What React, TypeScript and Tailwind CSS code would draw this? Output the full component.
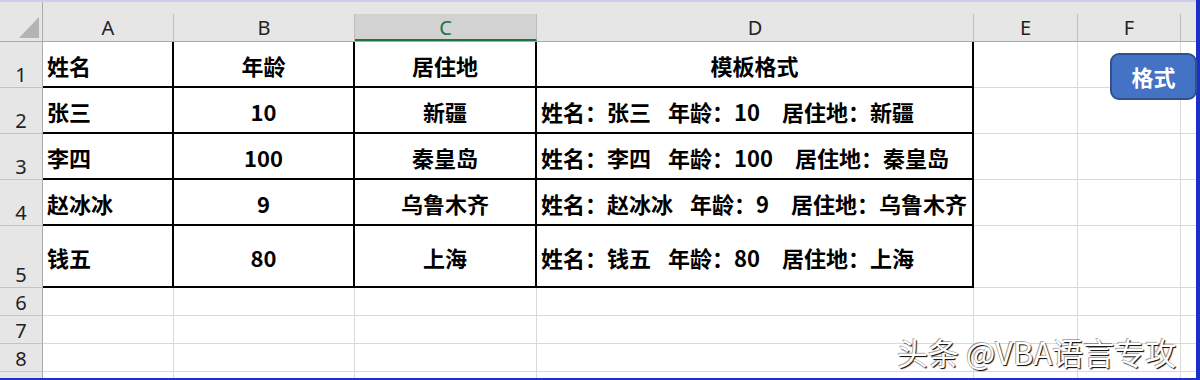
import React from "react";

const FONT = '"Noto Sans CJK SC", "Noto Sans", sans-serif';
const HFONT = '"Noto Sans", "Liberation Sans", sans-serif';

const cols = [
  { key: "A", w: "w-[131px]" },
  { key: "B", w: "w-[181px]" },
  { key: "C", w: "w-[182px]" },
  { key: "D", w: "w-[437px]" },
  { key: "E", w: "w-[104px]" },
  { key: "F", w: "w-[103px]" },
];

type Row = { n: number; h: string; data?: [string, string, string, string] };

const rows: Row[] = [
  { n: 1, h: "h-[46px]", data: ["姓名", "年龄", "居住地", "模板格式"] },
  { n: 2, h: "h-[46px]", data: ["张三", "10", "新疆", ""] },
  { n: 3, h: "h-[46px]", data: ["李四", "100", "秦皇岛", ""] },
  { n: 4, h: "h-[46px]", data: ["赵冰冰", "9", "乌鲁木齐", ""] },
  { n: 5, h: "h-[62px]", data: ["钱五", "80", "上海", ""] },
  { n: 6, h: "h-[28px]" },
  { n: 7, h: "h-[28px]" },
  { n: 8, h: "h-[28px]" },
];

function Template({ name, age, place }: { name: string; age: string; place: string }) {
  return (
    <span className="flex whitespace-pre">
      <span>姓名：{name}</span>
      <span className="ml-[17px]">年龄：{age}</span>
      <span className="ml-[22px]">居住地：{place}</span>
    </span>
  );
}

export default function App() {
  return (
    <div className="w-[1200px] h-[380px] flex bg-white overflow-hidden relative" style={{ fontFamily: FONT }}>
      <div className="w-[1196px] h-[380px] flex flex-col">
        {/* top strip */}
        <div className="h-[2px] bg-[#cdcdf0]" />
        {/* column header */}
        <div className="h-[40px] flex bg-[#e6e6e6] border-b border-[#ababab]">
          <div className="w-[43px] h-full border-r border-[#ababab] relative">
            <svg className="absolute left-[19px] top-[15px]" width="20" height="21" viewBox="0 0 20 21">
              <polygon points="20,0 20,21 0,21" fill="#b4b4b4" />
            </svg>
          </div>
          {cols.map((c) => {
            const sel = c.key === "C";
            return (
              <div key={c.key} className={`${c.w} h-full flex flex-col`}>
                <div className="h-[12px]" />
                <div
                  className={`flex-1 flex items-end justify-center border-r border-[#bdbdbd] ${
                    sel ? "bg-[#d2d2d2] text-[#217346] border-b-2 border-b-[#217346]" : "text-[#222]"
                  }`}
                >
                  <span className={`text-[20px] leading-[20px] ${sel ? "pb-[1px]" : "pb-[3px]"}`} style={{ fontFamily: HFONT }}>
                    {c.key}
                  </span>
                </div>
              </div>
            );
          })}
          <div className="flex-1 flex flex-col">
            <div className="h-[12px]" />
            <div className="flex-1" />
          </div>
        </div>
        {/* rows */}
        {rows.map((r) => {
          const inTable = !!r.data;
          const last = r.n === 5;
          const bb = inTable ? "border-b-2 border-b-black" : "border-b border-b-[#d9d9d9]";
          return (
            <div key={r.n} className={`${r.h} flex`}>
              <div
                className={`w-[43px] h-full bg-[#e6e6e6] border-r border-[#ababab] border-b border-b-[#c4c4c4] flex items-end justify-center text-[#222]`}
              >
                <span className="text-[20px] leading-[20px] pb-[2px]" style={{ fontFamily: HFONT }}>
                  {r.n}
                </span>
              </div>
              {cols.map((c, i) => {
                const tableCol = inTable && i < 4;
                const br = tableCol ? "border-r-2 border-r-black" : "border-r border-r-[#d9d9d9]";
                const b = tableCol ? bb : "border-b border-b-[#d9d9d9]";
                const lastE = last && i >= 4 ? "border-b border-b-[#d9d9d9]" : "";
                let content: React.ReactNode = null;
                let align = "justify-start pl-[4px]";
                if (inTable && i < 4) {
                  const d = r.data!;
                  if (i === 0) content = d[0];
                  if (i === 1 || i === 2) {
                    content = d[i];
                    align = "justify-center";
                  }
                  if (i === 3) {
                    if (r.n === 1) {
                      content = d[3];
                      align = "justify-center";
                    } else {
                      content = <Template name={d[0]} age={d[1]} place={d[2]} />;
                    }
                  }
                }
                return (
                  <div
                    key={c.key}
                    className={`${c.w} h-full ${br} ${lastE || b} flex items-center ${align} pt-[3px] text-[22px] font-bold text-black`}
                  >
                    {content}
                  </div>
                );
              })}
              <div className="flex-1 h-full border-b border-b-[#d9d9d9]" />
            </div>
          );
        })}
        <div className="flex-1 flex">
          <div className="w-[43px] bg-[#e6e6e6] border-r border-[#ababab]" />
          {cols.map((c) => (
            <div key={c.key} className={`${c.w} border-r border-r-[#d9d9d9]`} />
          ))}
        </div>
        <div className="h-[2px] bg-[#1c30c8]" />
      </div>
      <div className="w-[4px] h-[380px] bg-[#1c30c8]" />

      {/* floating button */}
      <div className="absolute left-[1110px] top-[53px] w-[87px] h-[47px] rounded-[9px] bg-[#4472c4] border-2 border-[#2f528f] flex items-center justify-center text-white text-[22px] font-bold">
        格式
      </div>

      {/* watermark */}
      <div
        className="absolute left-[897px] top-[331px] text-[31px] text-white whitespace-pre leading-[42px] [text-shadow:1px_1px_1px_#000,-1px_-1px_0_rgba(0,0,0,0.35)]"
        style={{ fontFamily: FONT }}
      >
        头条 @VBA语言专攻
      </div>
    </div>
  );
}
